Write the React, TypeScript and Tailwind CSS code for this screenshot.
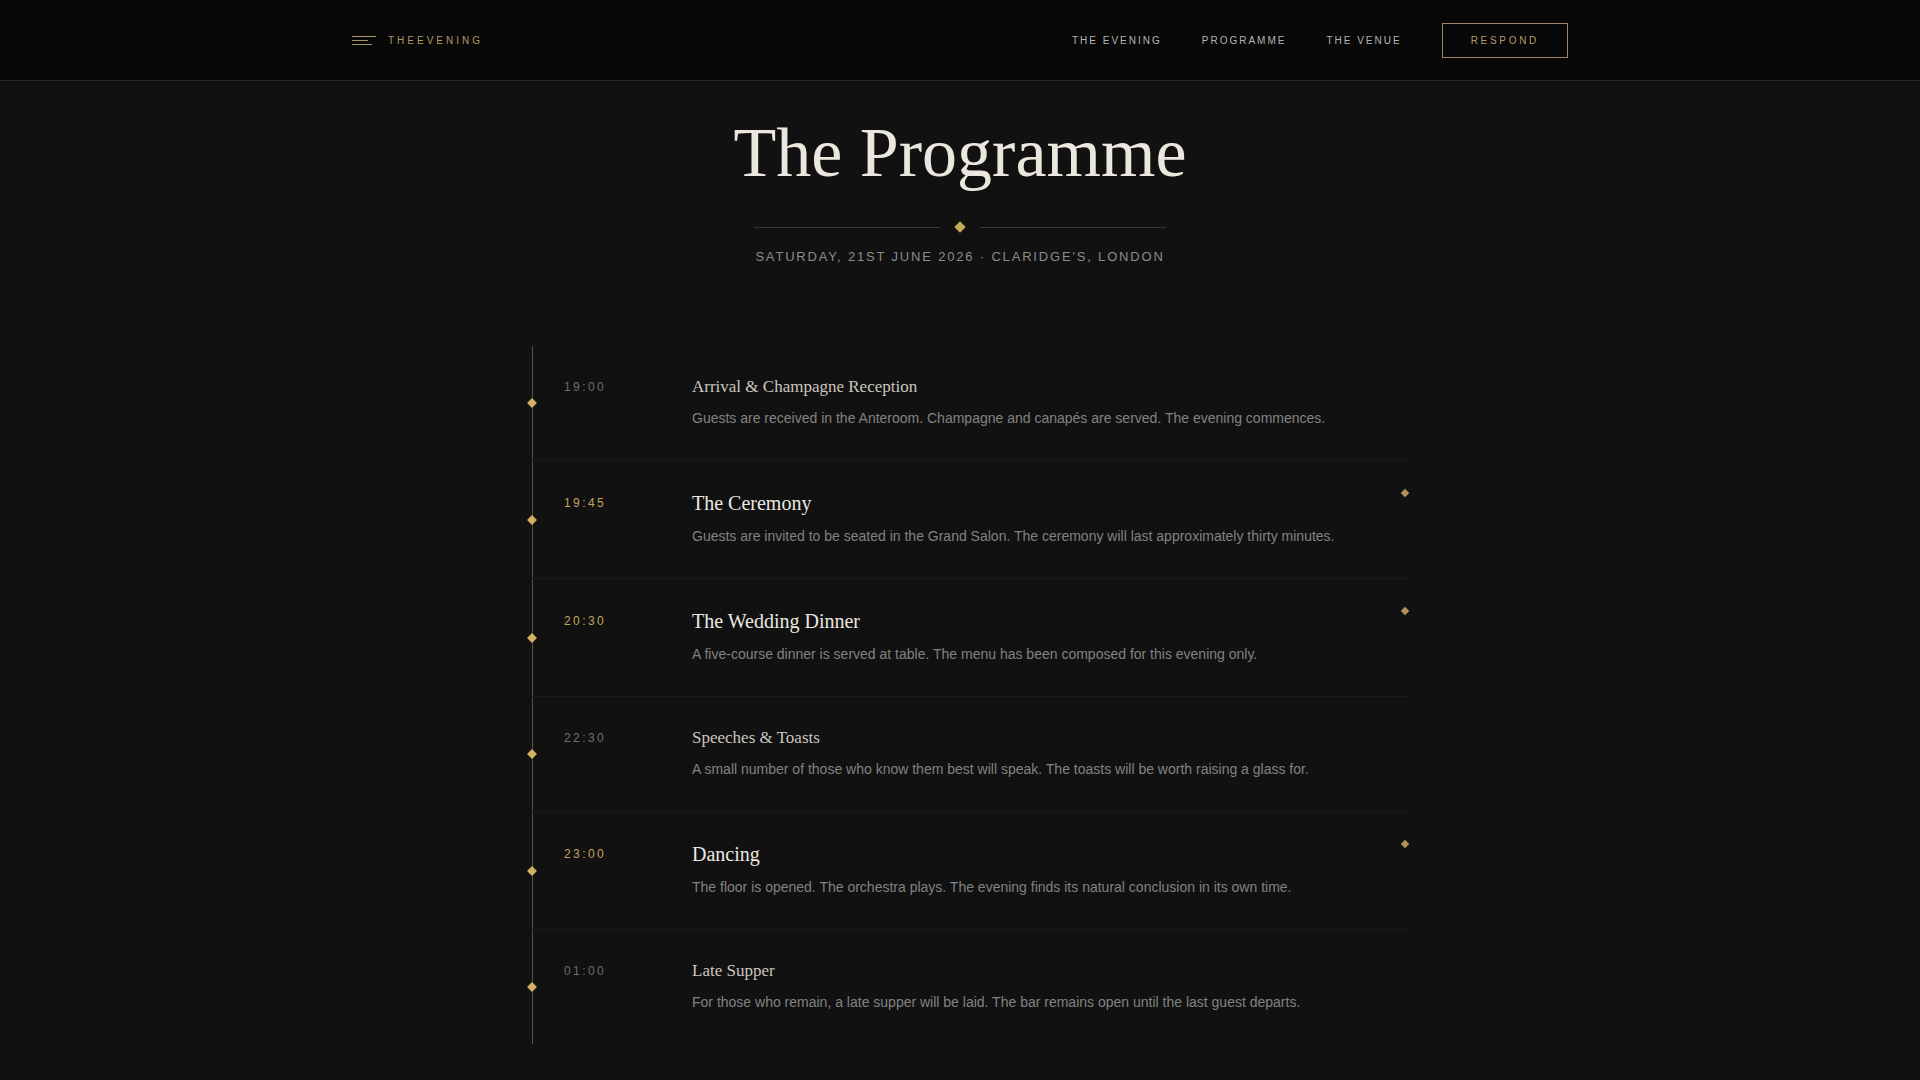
type Item = {
  time: string;
  title: string;
  text: string;
  featured?: boolean;
};

const programme: Item[] = [
  {
    time: "19:00",
    title: "Arrival & Champagne Reception",
    text: "Guests are received in the Anteroom. Champagne and canapés are served. The evening commences.",
  },
  {
    time: "19:45",
    title: "The Ceremony",
    text: "Guests are invited to be seated in the Grand Salon. The ceremony will last approximately thirty minutes.",
    featured: true,
  },
  {
    time: "20:30",
    title: "The Wedding Dinner",
    text: "A five-course dinner is served at table. The menu has been composed for this evening only.",
    featured: true,
  },
  {
    time: "22:30",
    title: "Speeches & Toasts",
    text: "A small number of those who know them best will speak. The toasts will be worth raising a glass for.",
  },
  {
    time: "23:00",
    title: "Dancing",
    text: "The floor is opened. The orchestra plays. The evening finds its natural conclusion in its own time.",
    featured: true,
  },
  {
    time: "01:00",
    title: "Late Supper",
    text: "For those who remain, a late supper will be laid. The bar remains open until the last guest departs.",
  },
];

const navLinks = ["The Evening", "Programme", "The Venue"];

function Header() {
  return (
    <header className="h-[81px] bg-[#080808] border-b border-[#262626]">
      <div className="max-w-7xl mx-auto h-full px-8 flex items-center justify-between">
        <a href="#" className="flex items-center gap-3">
          <span className="flex flex-col gap-[3px]">
            <span className="block w-6 h-px bg-[#a89468]" />
            <span className="block w-4 h-px bg-[#a89468]" />
            <span className="block w-5 h-px bg-[#a89468]" />
          </span>
          <span className="text-[10px] tracking-[0.3em] text-[#b09a64] uppercase">Theevening</span>
        </a>
        <nav className="flex items-center gap-10">
          {navLinks.map((l) => (
            <a key={l} href="#" className="text-[10px] tracking-[0.2em] uppercase text-[#b4b4b4]">
              {l}
            </a>
          ))}
          <button className="h-[35px] px-7 border border-[#a08468] text-[10px] tracking-[0.27em] uppercase text-[#b59a68]">
            Respond
          </button>
        </nav>
      </div>
    </header>
  );
}

function Row({ item, last }: { item: Item; last: boolean }) {
  return (
    <div
      className={`relative grid grid-cols-[96px_1fr] gap-8 pl-8 pt-7 pb-8 ${
        last ? "" : "border-b border-[#1b1b1b]"
      }`}
    >
      {/* marker on the timeline */}
      <span className="absolute left-0 top-1/2 w-[7px] h-[7px] -translate-x-1/2 -translate-y-1/2 rotate-45 bg-[#d2b062]" />
      {item.featured && (
        <span className="absolute right-0 top-[29px] w-1.5 h-1.5 rotate-45 bg-[#b0925a]" />
      )}
      <div
        className={`text-[12px] tracking-[0.2em] ${
          item.featured ? "leading-[29px] text-[#c2a45c]" : "leading-[26px] text-[#6f6f6f]"
        }`}
      >
        {item.time}
      </div>
      <div>
        <h3
          className={`font-['Liberation_Serif',serif] ${
            item.featured ? "text-[20px] leading-[29px] text-[#ece8e0]" : "text-[17px] leading-[26px] text-[#cac6bf]"
          }`}
        >
          {item.title}
        </h3>
        <p className="mt-2 text-[14px] leading-5 text-[#828282]">{item.text}</p>
      </div>
    </div>
  );
}

export default function App() {
  return (
    <div className="min-h-screen bg-[#111111] font-['Liberation_Sans',Arial,sans-serif]">
      <Header />
      <main className="pt-[33px] pb-10">
        <section className="flex flex-col items-center">
          <h1 className="font-['Liberation_Serif',serif] text-[70px] leading-[1.1] text-[#ebe7df]">The Programme</h1>
          <div className="mt-8 flex items-center gap-4">
            <span className="block w-[186px] h-px bg-[#3e3828]" />
            <span className="block w-2 h-2 rotate-45 bg-[#c9a85a]" />
            <span className="block w-[186px] h-px bg-[#3e3828]" />
          </div>
          <p className="mt-4 text-[13px] leading-5 tracking-[0.14em] uppercase text-[#8c8c8c]">
            Saturday, 21st June 2026 · Claridge's, London
          </p>
        </section>

        <section className="relative w-[896px] mx-auto mt-[79px] pl-5">
          <span className="absolute left-5 top-0 bottom-0 w-px bg-[#5f5232]" />
          {programme.map((item, i) => (
            <Row key={item.time} item={item} last={i === programme.length - 1} />
          ))}
        </section>
      </main>
    </div>
  );
}
